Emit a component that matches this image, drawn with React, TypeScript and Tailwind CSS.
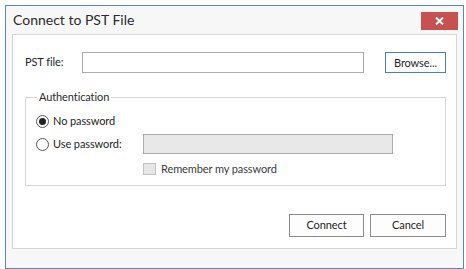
export default function App() {
  return (
    <div className="h-[269px] w-[466px] bg-white pl-[5px] pt-[5px] text-[11px] tracking-[-0.1px] text-[#1e1e1e] [font-family:Lato,sans-serif]">
      <div className="flex h-[264px] w-[459px] flex-col border border-[#5b86c6] bg-[#f7f7f7]">
        {/* title bar */}
        <div className="flex h-[28px] shrink-0 items-start justify-between">
          <span className="pl-[7px] pt-[5px] text-[14px] leading-[18px] tracking-normal text-[#2b2b2b]">Connect to PST File</span>
          <button className="mr-[5px] mt-[6px] flex h-[18px] w-[37px] items-center justify-center bg-[#c75050]">
            <svg width="9" height="8" viewBox="0 0 9 8">
              <path d="M1 0.5 L8 7.5 M8 0.5 L1 7.5" stroke="white" strokeWidth="2" />
            </svg>
          </button>
        </div>

        {/* content panel */}
        <div className="mx-[6px] flex h-[215px] flex-col border border-[#d6d6d6] bg-white pl-[12px] pr-[10px] pt-[17px]">
          <div className="flex h-[21px] items-center">
            <span className="w-[57px]">PST file:</span>
            <div className="h-[21px] w-[282px] border border-[#ababab] bg-white" />
            <button className="ml-auto h-[21px] w-[61px] border border-[#4a7ec2] bg-white leading-none">Browse...</button>
          </div>

          <fieldset className="mt-[16px] h-[97px] border border-[#d6d6d6] pl-[10px]">
            <legend className="ml-[1px] px-[2px] leading-[16px] text-[#2b2b2b]">Authentication</legend>
            <div className="mt-[8px] flex h-[16px] items-center">
              <span className="flex h-[13px] w-[13px] items-center justify-center rounded-full border border-[#555] bg-white">
                <span className="h-[7px] w-[7px] rounded-full bg-[#222]" />
              </span>
              <span className="ml-[4px]">No password</span>
            </div>
            <div className="mt-[5px] flex h-[20px] items-center">
              <span className="h-[13px] w-[13px] rounded-full border border-[#555] bg-white" />
              <span className="ml-[4px] w-[90px]">Use password:</span>
              <div className="h-[20px] w-[250px] border border-[#ababab] bg-[#e8e8e8]" />
            </div>
            <div className="mt-[8px] flex h-[14px] items-center pl-[107px]">
              <span className="h-[12px] w-[13px] border border-[#c3c3c3] bg-[#e6e6e6]" />
              <span className="ml-[5px] text-[#3a3a3a]">Remember my password</span>
            </div>
          </fieldset>

          <div className="mt-[28px] flex justify-end gap-[6px]">
            <button className="h-[23px] w-[75px] border border-[#8a8a8a] bg-[#fdfdfd]">Connect</button>
            <button className="h-[23px] w-[76px] border border-[#8a8a8a] bg-[#fdfdfd]">Cancel</button>
          </div>
        </div>
      </div>
    </div>
  );
}
